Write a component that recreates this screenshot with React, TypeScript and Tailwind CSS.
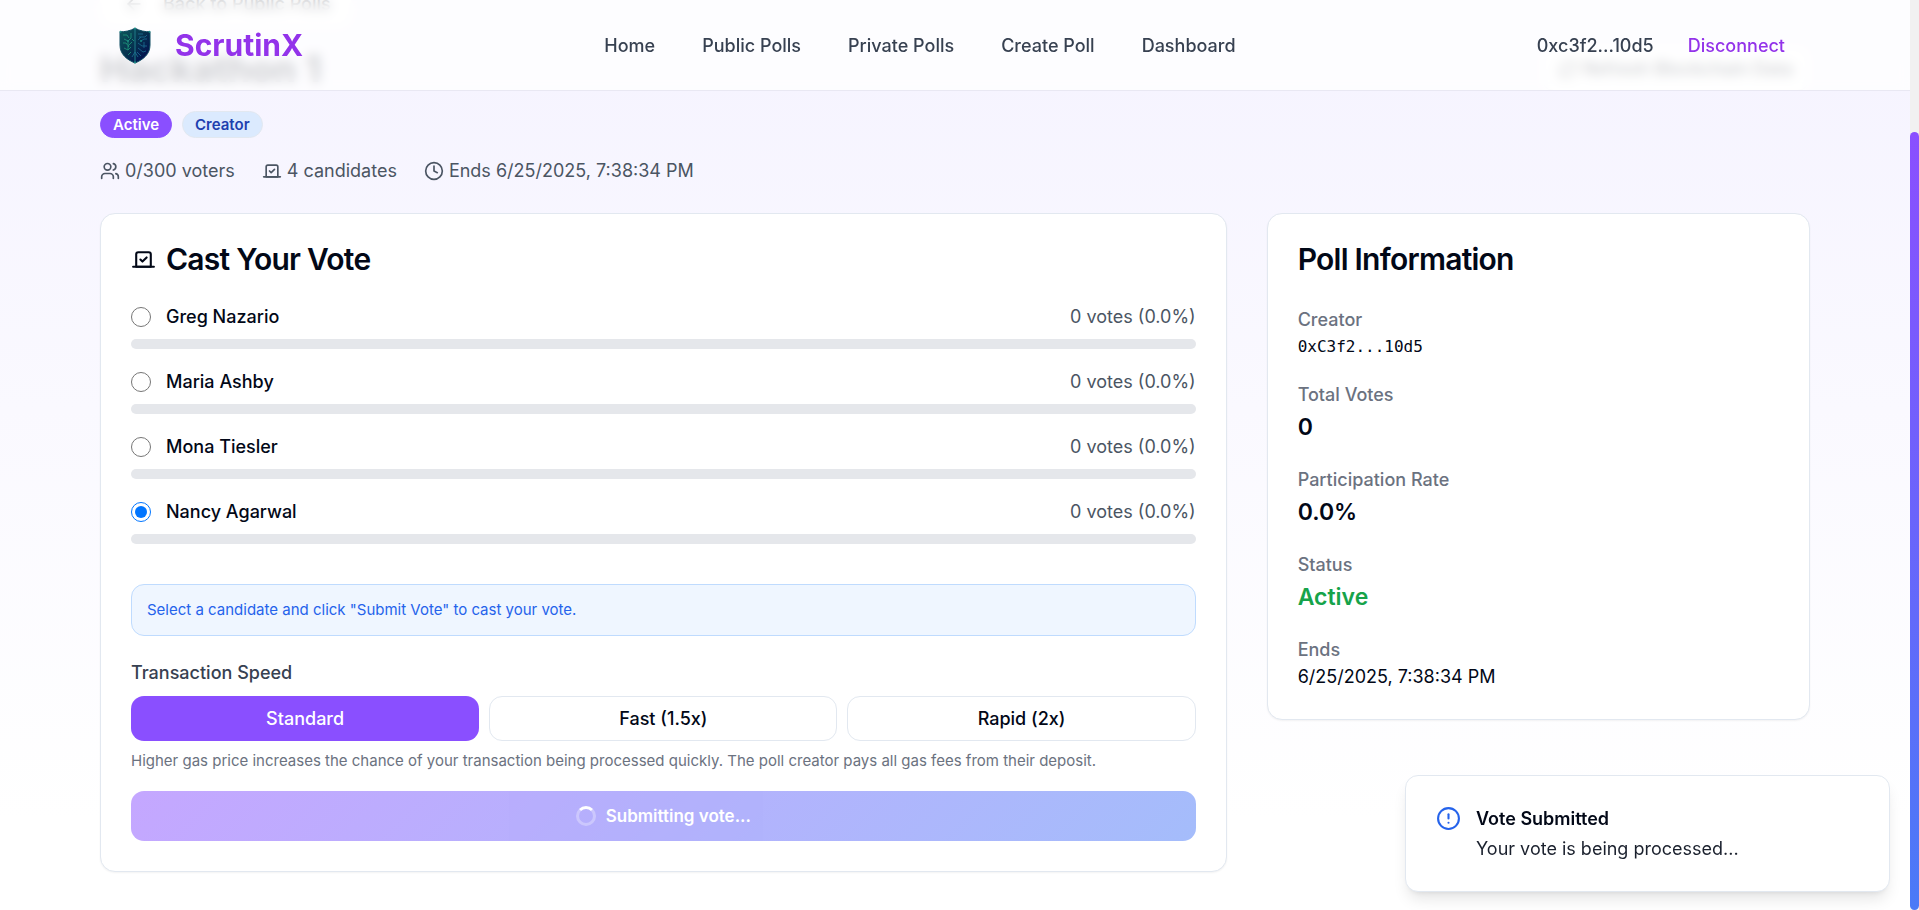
import type { ReactNode } from 'react';
import { CircleAlert, Clock, RefreshCw, Users, Vote, ArrowLeft } from 'lucide-react';

const navLinks = ['Home', 'Public Polls', 'Private Polls', 'Create Poll', 'Dashboard'];
const candidates = ['Greg Nazario', 'Maria Ashby', 'Mona Tiesler', 'Nancy Agarwal'];
const speeds = ['Standard', 'Fast (1.5x)', 'Rapid (2x)'];

function ShieldLogo() {
  return (
    <svg viewBox="0 0 32 37" className="h-[37px] w-8" aria-hidden="true">
      <defs>
        <linearGradient id="shield" x1="0" y1="0" x2="1" y2="1">
          <stop offset="0" stopColor="#0d5a5c" />
          <stop offset="0.5" stopColor="#06304f" />
          <stop offset="1" stopColor="#020650" />
        </linearGradient>
      </defs>
      <path
        d="M16 1.2C11 4 6 4.800 1 4.800V18c0 9 6.500 14.500 15 18 8.500-3.500 15-9 15-18V4.800C26 4.800 21 4 16 1.200Z"
        fill="url(#shield)"
        stroke="#0c4a60"
        strokeWidth="1"
      />
      <path d="M16 1v35" stroke="#1b7280" strokeWidth="1.200" />
      <g fill="none" stroke="#1f9a7c" strokeWidth="0.800">
        <path d="M4 8h4l2 3M5 12l4 2v4M12 6v5l-3 3M4 16h3l3 4M13 15l-4 4v4M5 21l4 2 3-3M12 25l-3 3M13 12l2 2" />
      </g>
      <g fill="none" stroke="#1c6f93" strokeWidth="0.800">
        <path d="M19 7h5M20 10h6l2-2M22 14l3-2h3M19 16l4 3h5M19 21l5 4 3-1M18 25l4 4M19 13l3-3M25 15v6M13 30l3-5 3 5" />
      </g>
      <g fill="#1d8f86">
        <circle cx="1.500" cy="4.800" r="1" />
        <circle cx="30.500" cy="4.800" r="1" />
        <circle cx="16" cy="1.500" r="1" />
        <circle cx="9" cy="14" r="0.900" />
        <circle cx="22" cy="14" r="0.900" />
        <circle cx="16" cy="35.500" r="1" />
      </g>
    </svg>
  );
}

function Header() {
  return (
    <header className="fixed inset-x-0 top-0 z-20 mr-[9px] border-b border-[#e9e8f3] bg-white/80 backdrop-blur-[6px]">
      <div className="mx-auto flex h-[90px] max-w-[1750px] items-center justify-between px-5">
        <a href="#" className="flex items-center gap-6 pl-[19px]">
          <ShieldLogo />
          <span className="text-[30px] leading-9 font-bold text-[#9333ea]">ScrutinX</span>
        </a>
        <nav className="flex items-center gap-[47px]">
          {navLinks.map((name) => (
            <a key={name} href="#" className="font-medium text-[#374151]">
              {name}
            </a>
          ))}
        </nav>
        <div className="flex items-center gap-3.5 pr-[5px]">
          <span className="font-medium text-[#374151]">0xc3f2...10d5</span>
          <button type="button" className="px-5 py-2.5 font-medium text-[#9333ea]">
            Disconnect
          </button>
        </div>
      </div>
    </header>
  );
}

function Card({ children }: { children: ReactNode }) {
  return (
    <section className="rounded-[15px] border border-slate-200 bg-white p-[30px] shadow-xs">
      {children}
    </section>
  );
}

function VoteCard() {
  return (
    <Card>
      <h2 className="mb-[30px] flex items-center gap-2.5 text-[30px] leading-[30px] font-semibold tracking-tight">
        <Vote size={25} />
        Cast Your Vote
      </h2>
      <div className="space-y-5">
        {candidates.map((name, i) => (
          <div key={name}>
            <div className="mb-2.5 flex items-center justify-between">
              <label className="flex items-center gap-[15px] font-medium">
                <input type="radio" name="candidate" defaultChecked={i === 3} className="size-5" />
                {name}
              </label>
              <span className="text-[#4b5563]">0 votes (0.0%)</span>
            </div>
            <div className="h-2.5 rounded-full bg-gray-200" />
          </div>
        ))}
      </div>
      <p className="mt-10 rounded-[13px] border border-[#bfdbfe] bg-[#eff6ff] p-[15px] text-[15px] leading-5 text-[#2563eb]">
        Select a candidate and click "Submit Vote" to cast your vote.
      </p>
      <h3 className="mt-6 mb-[11px] font-medium text-[#374151]">Transaction Speed</h3>
      <div className="grid grid-cols-3 gap-2.5">
        {speeds.map((speed, i) => (
          <button
            key={speed}
            type="button"
            className={
              i === 0
                ? 'h-[45px] rounded-[13px] bg-[#8a4fff] font-medium text-white'
                : 'h-[45px] rounded-[13px] border border-slate-200 bg-white font-medium'
            }
          >
            {speed}
          </button>
        ))}
      </div>
      <p className="mt-2.5 text-[15px] leading-5 text-[#6b7280]">
        Higher gas price increases the chance of your transaction being processed quickly. The poll creator pays all gas
        fees from their deposit.
      </p>
      <button
        type="button"
        disabled
        className="mt-5 flex h-[50px] w-full items-center justify-center gap-2.5 rounded-[13px] bg-[linear-gradient(135deg,#8a4fff,#4a7af7)] text-[17px] font-semibold text-white opacity-50"
      >
        <span className="size-5 rounded-full border-[3px] border-white/30 border-t-white" />
        Submitting vote...
      </button>
    </Card>
  );
}

function InfoItem({ label, children }: { label: string; children: ReactNode }) {
  return (
    <div>
      <dt className="pt-0.5 leading-7 font-medium text-[#6b7280]">{label}</dt>
      {children}
    </div>
  );
}

function PollInfo() {
  return (
    <Card>
      <h2 className="mb-[30px] text-[30px] leading-[30px] font-semibold tracking-tight">Poll Information</h2>
      <dl className="space-y-5">
        <InfoItem label="Creator">
          <dd className="font-['DejaVu_Sans_Mono',monospace] text-[16px] leading-[25px]">0xC3f2...10d5</dd>
        </InfoItem>
        <InfoItem label="Total Votes">
          <dd className="pt-0.5 text-[23px] leading-[33px] font-semibold">0</dd>
        </InfoItem>
        <InfoItem label="Participation Rate">
          <dd className="pt-0.5 text-[23px] leading-[33px] font-semibold">0.0%</dd>
        </InfoItem>
        <InfoItem label="Status">
          <dd className="pt-0.5 text-[23px] leading-[33px] font-semibold text-[#16a34a]">Active</dd>
        </InfoItem>
        <InfoItem label="Ends">
          <dd>6/25/2025, 7:38:34 PM</dd>
        </InfoItem>
      </dl>
    </Card>
  );
}

function Toast() {
  return (
    <div
      role="status"
      className="fixed right-[29px] bottom-[18px] z-30 flex w-[485px] items-start gap-[15px] rounded-[13px] border border-slate-200 bg-white p-[30px] shadow-lg"
    >
      <CircleAlert size={25} className="text-[#2563eb]" />
      <div className="space-y-[5px]">
        <p className="font-semibold">Vote Submitted</p>
        <p className="opacity-90">Your vote is being processed...</p>
      </div>
    </div>
  );
}

export default function App() {
  return (
    <div className="h-screen overflow-hidden bg-[linear-gradient(180deg,#f5f3ff,#ffffff_90%)] pr-[9px] font-['Inter',sans-serif] text-[18px] leading-[25px] text-[#020817]">
      <Header />
      <main className="mx-auto -mt-[19px] max-w-[1750px] px-5">
        <button
          type="button"
          className="flex h-[45px] items-center gap-[15px] rounded-[13px] bg-white px-5 font-medium"
        >
          <ArrowLeft size={20} className="mx-1" />
          Back to Public Polls
        </button>
        <div className="mt-5 flex items-center justify-between">
          <h1 className="text-[37px] leading-[45px] font-bold">Hackathon 1</h1>
          <button
            type="button"
            className="flex h-[45px] items-center gap-[5px] rounded-[13px] border border-slate-200 bg-white px-4 font-medium"
          >
            <RefreshCw size={20} />
            Refresh Blockchain Data
          </button>
        </div>
        <div className="mt-5 flex gap-2.5 text-[15px] leading-[25px] font-semibold">
          <span className="rounded-full border border-[#8a4fff] bg-[#8a4fff] px-3 text-white">Active</span>
          <span className="rounded-full border border-slate-200 bg-[#dbeafe] px-3 text-[#1e40af]">Creator</span>
        </div>
        <div className="mt-5 flex gap-[27px] text-[#4b5563]">
          <span className="flex items-center gap-[5px]">
            <Users size={20} />
            0/300 voters
          </span>
          <span className="flex items-center gap-[5px]">
            <Vote size={20} />4 candidates
          </span>
          <span className="flex items-center gap-[5px]">
            <Clock size={20} />
            Ends 6/25/2025, 7:38:34 PM
          </span>
        </div>
        <div className="mt-[30px] grid grid-cols-3 items-start gap-10">
          <div className="col-span-2">
            <VoteCard />
          </div>
          <PollInfo />
        </div>
      </main>
      <Toast />
      <div className="fixed inset-y-0 right-0 z-40 w-[9px] bg-[#f1f1f1] pt-[132px]" aria-hidden="true">
        <div className="h-full rounded-full bg-[linear-gradient(180deg,#8a4fff,#4a7af7)]" />
      </div>
    </div>
  );
}
